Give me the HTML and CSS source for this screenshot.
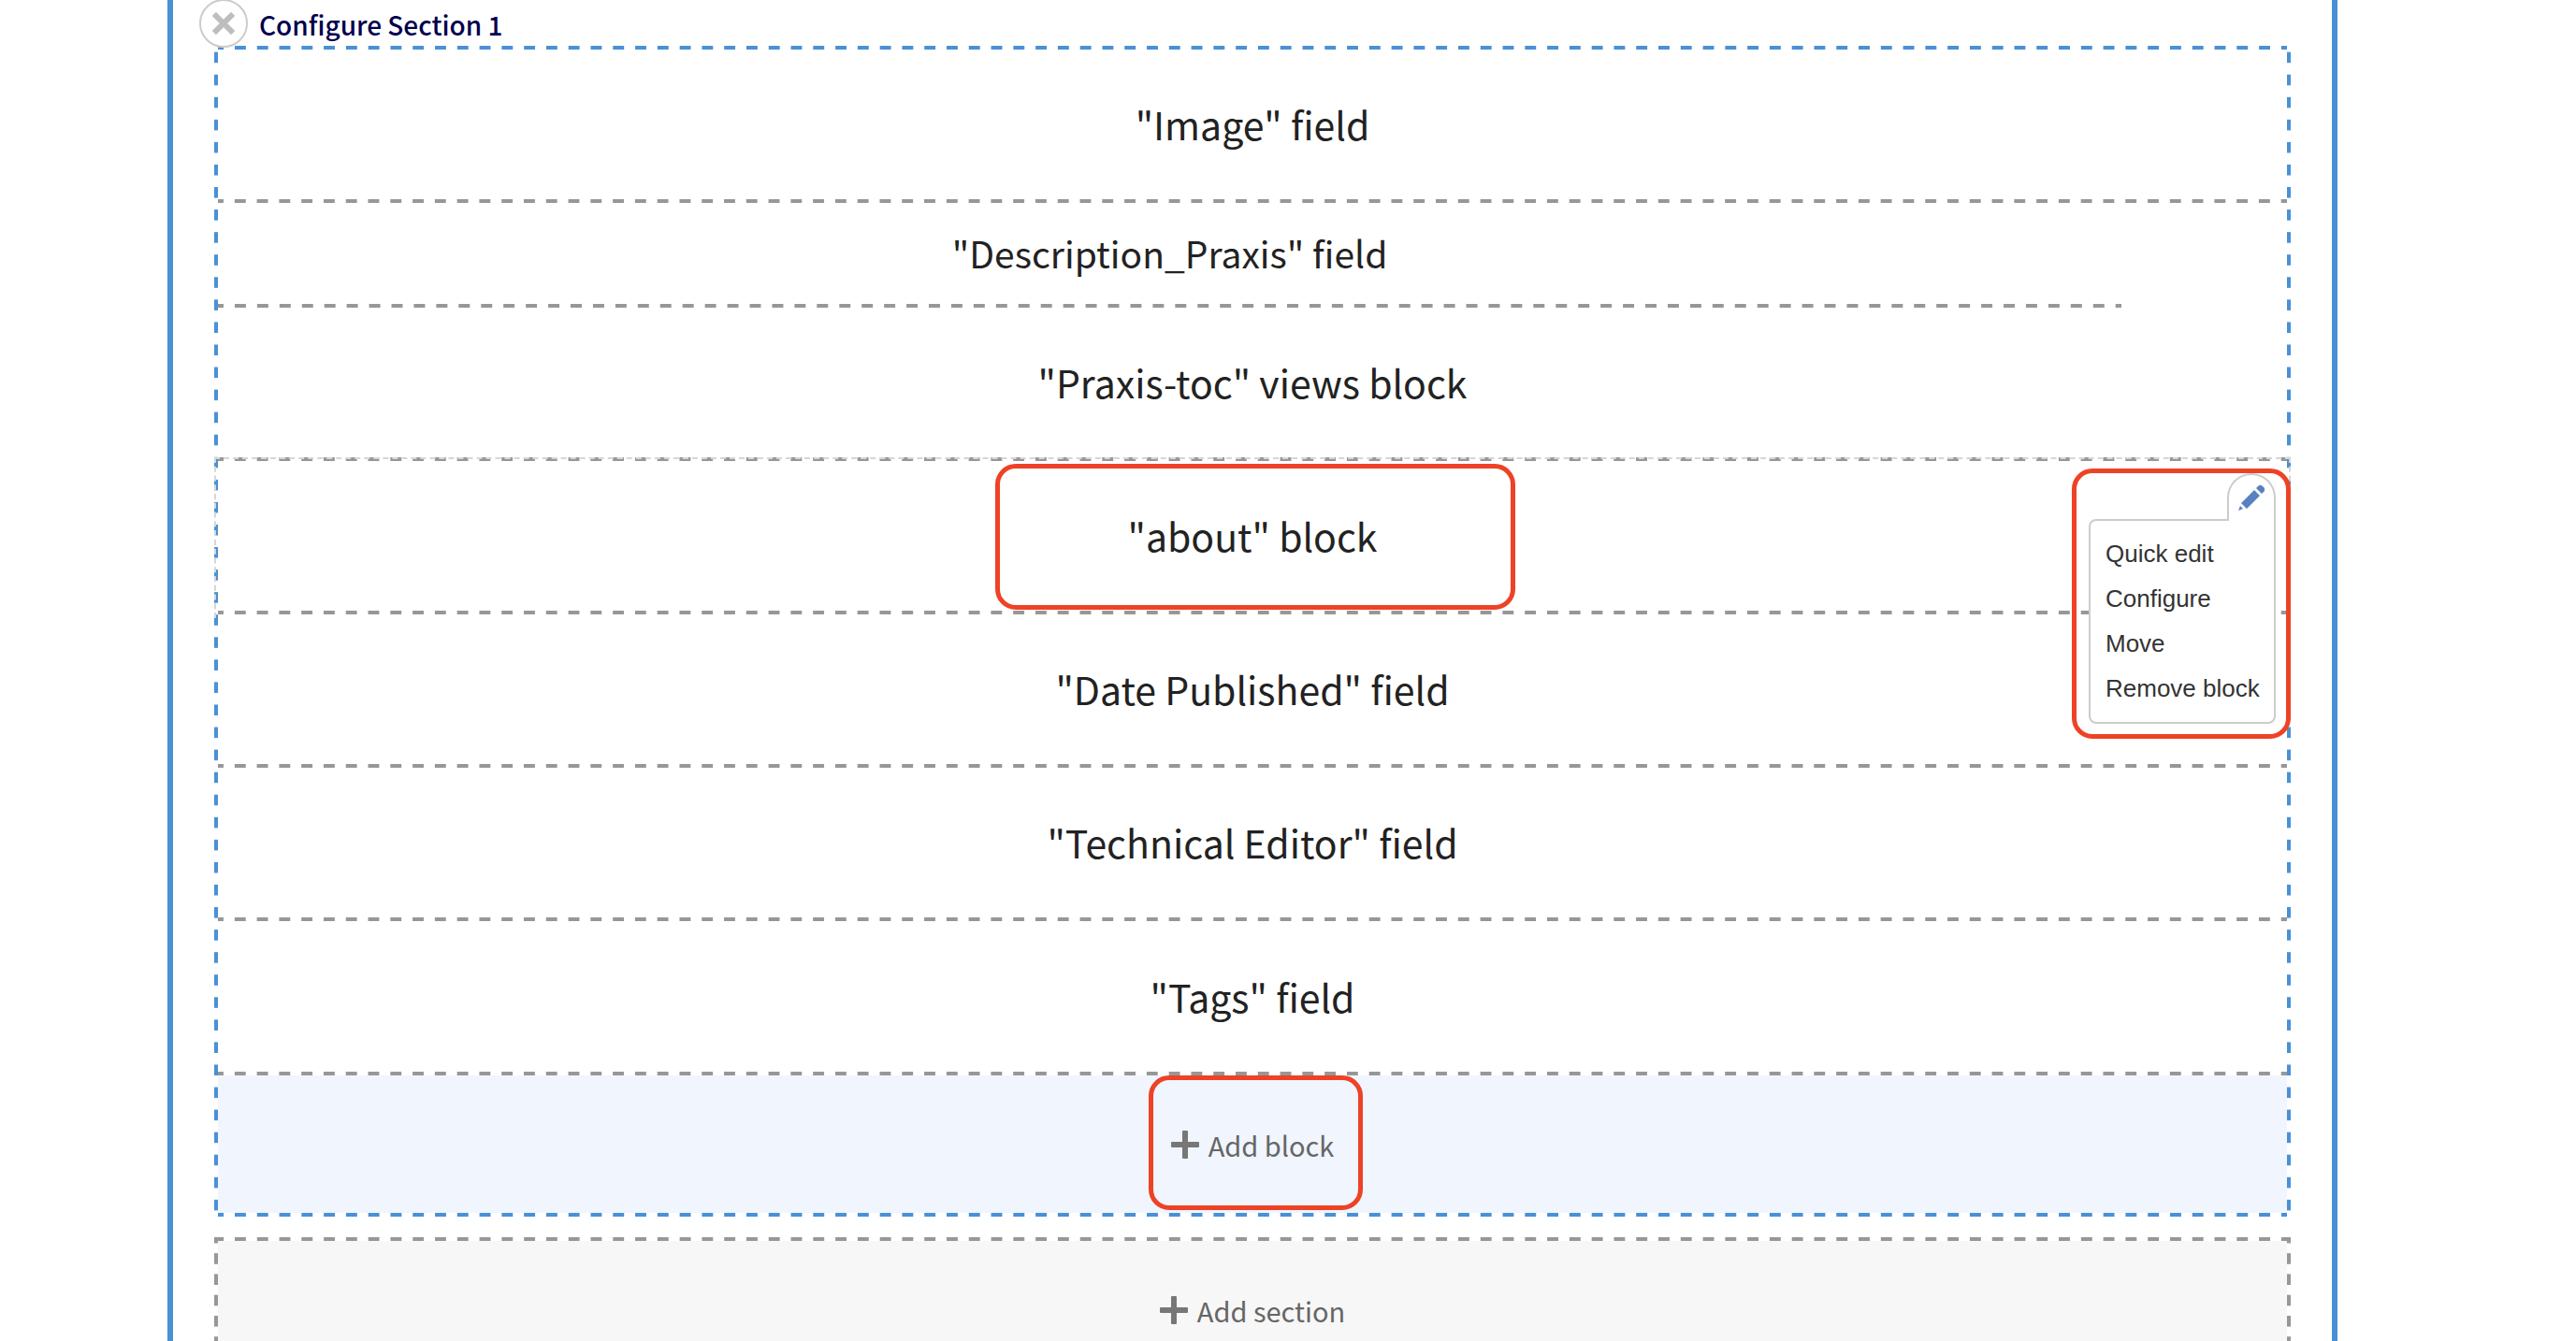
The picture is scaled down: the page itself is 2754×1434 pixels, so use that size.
FILE: index.html
```html
<!DOCTYPE html>
<html lang="en">
<head>
<meta charset="utf-8">
<title>Layout builder</title>
<link rel="stylesheet" href="styles.css">
</head>
<body>
<main class="layout-builder">
  <section class="section">
    <header class="section-header">
      <button class="remove-section" type="button" aria-label="Remove Section 1">
        <svg viewBox="0 0 24 24" width="24" height="24" aria-hidden="true"><path d="M4 4L20 20M20 4L4 20" stroke="#bebebe" stroke-width="6" stroke-linecap="square"/></svg>
      </button>
      <a class="configure-section" href="#configure">Configure Section 1</a>
    </header>
    <div class="region dashed-box">
      <div class="block">"Image" field</div>
      <div class="block block-narrow">"Description_Praxis" field</div>
      <div class="block">"Praxis-toc" views block</div>
      <div class="block block-active">"about" block
        <div class="highlight highlight-block"></div>
        <div class="highlight contextual">
          <button class="trigger" type="button" aria-label="Close configuration options">
            <svg viewBox="0 0 28 28" width="28" height="28" aria-hidden="true"><path fill="#5b80c2" d="M0 28l2-5 3 3zM3 20L17 6l6 6L9 26zM19 4l2-2q3-3 6 1q3 3 0 5l-2 2z"/></svg>
          </button>
          <ul class="contextual-links">
            <li><a href="#quick-edit">Quick edit</a></li>
            <li><a href="#configure-block">Configure</a></li>
            <li><a href="#move">Move</a></li>
            <li><a href="#remove">Remove block</a></li>
          </ul>
        </div>
      </div>
      <div class="block">"Date Published" field</div>
      <div class="block">"Technical Editor" field</div>
      <div class="block">"Tags" field</div>
      <div class="add add-block">
        <a class="add-link" href="#add-block"><svg viewBox="0 0 30 30" width="30" height="30" aria-hidden="true"><path fill="#777" d="M12 1q0-1 1-1h4q1 0 1 1v11h11q1 0 1 1v4q0 1-1 1H18v11q0 1-1 1h-4q-1 0-1-1V18H1q-1 0-1-1v-4q0-1 1-1h11z"/></svg>Add block</a>
        <div class="highlight highlight-add"></div>
      </div>
    </div>
  </section>
  <div class="add add-section dashed-box">
    <a class="add-link" href="#add-section"><svg viewBox="0 0 30 30" width="30" height="30" aria-hidden="true"><path fill="#777" d="M12 1q0-1 1-1h4q1 0 1 1v11h11q1 0 1 1v4q0 1-1 1H18v11q0 1-1 1h-4q-1 0-1-1V18H1q-1 0-1-1v-4q0-1 1-1h11z"/></svg>Add section</a>
  </div>
</main>
</body>
</html>
```
FILE: styles.css
```css
* { box-sizing: border-box; }

body {
  margin: 0;
  height: 100vh;
  overflow: hidden;
  background: #fff;
  color: #222;
  font-family: "Noto Sans CJK SC", sans-serif;
}

a { color: inherit; text-decoration: none; }
svg { display: block; flex: none; fill: none; }

.layout-builder {
  margin: 0 255px 0 179px;
  padding: 0 44px;
  border: solid #4a90d5;
  border-width: 0 6px;
}

.section { margin-bottom: 22px; }

.section-header {
  display: flex;
  align-items: center;
  gap: 12px;
  height: 49px;
  margin-left: -16px;
}

.remove-section {
  position: relative;
  z-index: 1;
  display: grid;
  place-items: center;
  width: 52px;
  height: 52px;
  padding: 0;
  border: 2px solid #ccc;
  border-radius: 50%;
  background: #fff;
}

.configure-section {
  padding-top: 2px;
  color: #00004d;
  font-size: 28px;
  font-weight: 500;
  line-height: 40px;
}

/* Dashed frame: half a dash at both ends of every side, so the corners join. */
.dashed-box {
  --dash: #4a90d5;
  --x: linear-gradient(90deg, var(--dash) 25%, transparent 25% 75%, var(--dash) 75%);
  --y: linear-gradient(var(--dash) 25%, transparent 25% 75%, var(--dash) 75%);
  position: relative;
  padding: 4px;
}

.dashed-box::before,
.dashed-box::after {
  content: "";
  position: absolute;
  pointer-events: none;
}

.dashed-box::before {
  inset: 0 4px;
  background: var(--x) top / calc(100% / 93) 4px repeat-x, var(--x) bottom / calc(100% / 93) 4px repeat-x;
}

.dashed-box::after {
  inset: 0;
  background: var(--y) left / 4px 24px, var(--y) right / 4px 24px;
  background-repeat: no-repeat round;
}

.block {
  position: relative;
  display: grid;
  place-items: center;
  height: 164px;
  padding-bottom: 6px;
  font-size: 41px;
  line-height: 60px;
  background: linear-gradient(90deg, #979797 25%, transparent 25% 75%, #979797 75%) bottom left / calc(100% / 93) 4px repeat-x;
}

.block:nth-last-child(2) { height: 165px; }

.block-narrow {
  width: 92%;
  height: 112px;
  font-size: 39px;
  background-size: calc(100% / 85) 4px;
}

.block-active { z-index: 1; }

.block-active::before {
  content: "";
  position: absolute;
  inset: -4px;
  border: 2px dashed #d6d6d6;
  border-bottom: 0;
}

.highlight {
  position: absolute;
  border: 5px solid #ee4226;
  border-radius: 22px;
}

.highlight-block {
  inset: 3px auto 5px 831px;
  width: 556px;
}

.contextual {
  top: 8px;
  right: -4px;
  width: 234px;
  padding: 0 11px 11px 13px;
  font-family: "Liberation Sans", Arial, sans-serif;
  font-size: 26px;
  line-height: 30px;
  color: #333;
}

.trigger {
  position: relative;
  z-index: 1;
  display: grid;
  place-items: center;
  width: 52px;
  height: 51px;
  margin: 0 0 -2px auto;
  padding: 0 0 2px;
  border: 2px solid #ccc;
  border-bottom: 0;
  border-radius: 26px 26px 0 0;
  background: #fff;
}

.contextual-links {
  margin: 0;
  padding: 11px 0 12px;
  list-style: none;
  border: 2px solid #ccc;
  border-radius: 8px 0 8px 8px;
  background: #fff;
}

.contextual-links a {
  display: block;
  padding: 9px 16px;
  white-space: nowrap;
}

.add {
  display: grid;
  place-items: center;
  height: 147px;
  color: #666;
  font-size: 29px;
  line-height: 40px;
}

.add-block {
  position: relative;
  background: #f0f5fe;
}

.add-link {
  display: flex;
  align-items: center;
  gap: 10px;
}

.highlight-add {
  inset: 0 auto 3px 995px;
  width: 229px;
}

.add-section {
  --dash: #979797;
  height: 156px;
  background: #f7f7f7 content-box;
}

.add-section::after {
  background-size: 4px 21px;
}
```
